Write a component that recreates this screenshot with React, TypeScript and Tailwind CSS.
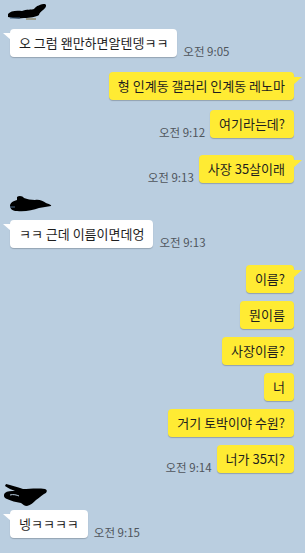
import React from "react";

const FONT = '"Noto Sans CJK KR", "Noto Sans", sans-serif';

function Time({ t }: { t: string }) {
  return (
    <span className="text-[11.5px] leading-[11px] text-[#4f555c] whitespace-nowrap">{t}</span>
  );
}

function Mine({ text, tail, time, mt }: { text: string; tail?: boolean; time?: string; mt: string }) {
  return (
    <div className={`flex justify-end items-end gap-[5px] pr-[11px] ${mt}`}>
      {time && <Time t={time} />}
      <div className="relative h-[28px] flex items-center px-[9px] bg-[#ffeb33] rounded-[4px] shadow-[0_1px_1px_rgba(0,0,0,0.22)] text-[13px] text-[#1e1e1e] whitespace-nowrap">
        {text}
        {tail && (
          <svg className="absolute right-[-8px] top-[5px]" width="9" height="9" viewBox="0 0 9 9">
            <polygon points="0,0 9,0 0,8" fill="#ffeb33" />
          </svg>
        )}
      </div>
    </div>
  );
}

function Theirs({ text, time, mt }: { text: string; time: string; mt: string }) {
  return (
    <div className={`flex items-end gap-[6px] pl-[10px] ${mt}`}>
      <div className="relative h-[28px] flex items-center px-[9px] bg-white rounded-[4px] shadow-[0_1px_1px_rgba(0,0,0,0.2)] text-[13px] text-[#1e1e1e] whitespace-nowrap">
        {text}
        <svg className="absolute left-[-7px] top-[4px]" width="8" height="8" viewBox="0 0 8 8">
          <polygon points="0,0 8,0 8,7" fill="#ffffff" />
        </svg>
      </div>
      <Time t={time} />
    </div>
  );
}

export default function App() {
  return (
    <div
      className="w-[305px] h-[553px] bg-[#bacee0] overflow-hidden flex flex-col"
      style={{ fontFamily: FONT }}
    >
      {/* scribble 1 */}
      <div className="mt-[3px] ml-[6px] h-[17px]">
        <svg width="42" height="17" viewBox="0 0 42 17">
          <path d="M2 11 C4 8 10 7 16 8 C20 6 26 7 28 6 C30 3 35 1 39 1 C41 2 40 5 37 7 C35 9 33 10 33 12 C30 14 24 15 18 15 C12 16 6 15 2 14 Z" fill="#000" />
          <path d="M4 15 L14 15" stroke="#3a5a7a" strokeWidth="1" />
          <path d="M20 16 L30 16" stroke="#7a6a3a" strokeWidth="1" />
        </svg>
      </div>
      <Theirs text="오 그럼 왠만하면알텐뎅ㅋㅋ" time="오전 9:05" mt="mt-[9px]" />
      <Mine text="형 인계동 갤러리 인계동 레노마" tail mt="mt-[15px]" />
      <Mine text="여기라는데?" time="오전 9:12" mt="mt-[10px]" />
      <Mine text="사장 35살이래" time="오전 9:13" tail mt="mt-[17px]" />
      {/* scribble 2 */}
      <div className="mt-[12px] ml-[9px] h-[18px]">
        <svg width="44" height="18" viewBox="0 0 44 18">
          <path d="M8 2 C10 0 14 1 15 3 C18 4 22 5 26 5 C30 4 34 6 37 8 C40 9 43 10 42 11 C38 12 34 12 30 13 C24 15 16 17 8 16 C4 16 1 14 1 11 C1 8 4 6 8 5 Z" fill="#000" />
          <path d="M1 12 L6 12" stroke="#4a6a8a" strokeWidth="1" />
        </svg>
      </div>
      <Theirs text="ㅋㅋ 근데 이름이면데엉" time="오전 9:13" mt="mt-[7px]" />
      <Mine text="이름?" tail mt="mt-[17px]" />
      <Mine text="뭔이름" mt="mt-[8px]" />
      <Mine text="사장이름?" mt="mt-[8px]" />
      <Mine text="너" mt="mt-[8px]" />
      <Mine text="거기 토박이야 수원?" mt="mt-[8px]" />
      <Mine text="너가 35지?" time="오전 9:14" mt="mt-[8px]" />
      {/* scribble 3 */}
      <div className="mt-[10px] ml-[3px] h-[24px]">
        <svg width="46" height="24" viewBox="0 0 46 24">
          <path d="M3 1 C8 2 14 4 20 6 C26 6 34 5 42 6 C45 7 44 10 41 11 C38 13 36 15 33 17 C30 20 28 22 24 23 C21 23 20 21 18 20 C13 19 8 18 4 16 C1 15 0 12 2 10 C4 8 8 8 12 8 C9 7 5 5 2 3 Z" fill="#000" />
          <path d="M7 12 C10 11 14 12 16 13" stroke="#bacee0" strokeWidth="1" fill="none" />
        </svg>
      </div>
      <Theirs text="넹ㅋㅋㅋㅋ" time="오전 9:15" mt="mt-[3px]" />
    </div>
  );
}
